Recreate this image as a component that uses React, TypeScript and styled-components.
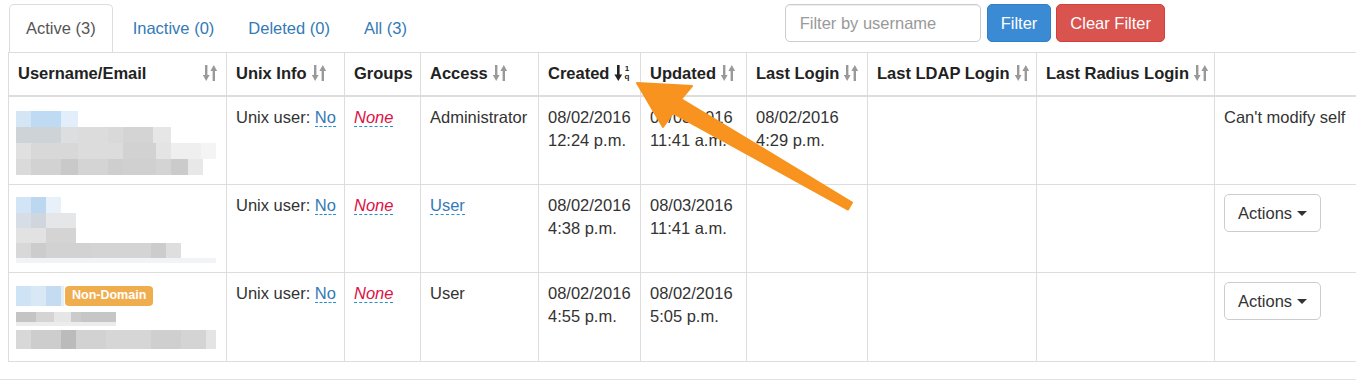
import React from "react";
import styled, { createGlobalStyle } from "styled-components";

const GlobalStyle = createGlobalStyle`
  html, body {
    margin: 0;
    padding: 0;
    overflow: hidden;
    background: #fff;
  }
  body {
    font-family: "Liberation Sans", Arial, Helvetica, sans-serif;
    font-size: 16.5px;
    line-height: 23px;
    color: #333;
  }
`;

const Page = styled.div`
  position: relative;
  width: 1356px;
  height: 380px;
  padding: 4px 0 0 8px;
  box-sizing: border-box;
  overflow: hidden;
`;

const Toolbar = styled.div`
  display: flex;
  align-items: flex-start;
  width: 1157px;
  height: 48px;
`;

const Tabs = styled.ul`
  display: flex;
  list-style: none;
  margin: 0;
  padding: 0 0 0 1px;
`;

const Tab = styled.li<{ $active?: boolean }>`
  padding: 12px 16px 12px;
  height: 48px;
  box-sizing: border-box;
  margin-right: ${(p) => (p.$active ? "3px" : "0")};
  border: 1px solid ${(p) => (p.$active ? "#ddd" : "transparent")};
  border-bottom: none;
  border-radius: 5px 5px 0 0;
  color: ${(p) => (p.$active ? "#555" : "#337ab7")};
  background: #fff;
  white-space: nowrap;
`;

const FilterForm = styled.form`
  display: flex;
  gap: 5px;
  margin: 0 0 0 auto;
`;

const FilterInput = styled.input`
  width: 196px;
  height: 38px;
  box-sizing: border-box;
  padding: 7px 14px;
  border: 1px solid #ccc;
  border-radius: 5px;
  font: inherit;
  color: #555;
  box-shadow: inset 0 1px 1px rgba(0, 0, 0, 0.075);
  margin-right: 1px;
  &::placeholder {
    color: #999;
  }
`;

const Button = styled.button<{ $variant: "primary" | "danger" | "default" }>`
  height: 38px;
  box-sizing: border-box;
  padding: 7px 13px;
  font: inherit;
  line-height: 22px;
  border-radius: 5px;
  border: 1px solid
    ${(p) =>
      p.$variant === "primary"
        ? "#2f7fc9"
        : p.$variant === "danger"
        ? "#d43f3a"
        : "#ccc"};
  background: ${(p) =>
    p.$variant === "primary"
      ? "#3b8bd4"
      : p.$variant === "danger"
      ? "#d9534f"
      : "#fff"};
  color: ${(p) => (p.$variant === "default" ? "#333" : "#fff")};
  display: inline-flex;
  align-items: center;
  white-space: nowrap;
`;

const Caret = styled.span`
  display: inline-block;
  margin-left: 5px;
  width: 0;
  height: 0;
  border-top: 5px solid #333;
  border-left: 5px solid transparent;
  border-right: 5px solid transparent;
`;

const Table = styled.table`
  border-collapse: collapse;
  table-layout: fixed;
  width: 1351px;
  border: 1px solid #ddd;
`;

const Th = styled.th`
  text-align: left;
  vertical-align: bottom;
  font-weight: bold;
  color: #222;
  padding: 9px 9px 10px;
  border: 1px solid #ddd;
  border-bottom: 2px solid #ddd;
  white-space: nowrap;
  line-height: 23px;
`;

const Td = styled.td`
  vertical-align: top;
  padding: 9px;
  border: 1px solid #ddd;
  line-height: 23px;
  white-space: nowrap;
`;

const FloatIcon = styled.span`
  float: right;
  margin-top: 2px;
  height: 18px;
`;

const InlineIcon = styled.span`
  display: inline-block;
  margin: 2px 0 0 5px;
  height: 18px;
  vertical-align: top;
`;

const Editable = styled.span<{ $empty?: boolean }>`
  color: ${(p) => (p.$empty ? "#dd1144" : "#337ab7")};
  font-style: ${(p) => (p.$empty ? "italic" : "normal")};
  border-bottom: 1px dashed #2a8fd1;
`;

const UserBlock = styled.div`
  height: 69px;
  margin-left: -2px;
`;

const BadgeLine = styled.div`
  display: flex;
  align-items: center;
  height: 26px;
  margin-top: 1px;
`;

const Label = styled.span`
  display: inline-block;
  background: #f0ad4e;
  color: #fff;
  font-weight: bold;
  font-size: 12.5px;
  line-height: 1;
  padding: 3px 7px 4px;
  border-radius: 4px;
  margin-left: 1px;
  white-space: nowrap;
`;

const FooterLine = styled.div`
  margin: 17px 0 0 -8px;
  width: 1356px;
  border-top: 1px solid #e2e2e2;
`;

const Overlay = styled.svg`
  position: absolute;
  left: 0;
  top: 0;
  pointer-events: none;
`;

type Block = [number, number, number, number, string];

function Mosaic({ blocks, width, height }: { blocks: Block[]; width: number; height: number }) {
  return (
    <svg width={width} height={height} shapeRendering="crispEdges" style={{ display: "block" }}>
      {blocks.map(([x, y, w, h, c], i) => (
        <rect key={i} x={x} y={y} width={w} height={h} fill={c} />
      ))}
    </svg>
  );
}

function SortIcon() {
  return (
    <svg width="14" height="18" viewBox="0 0 14 18" style={{ display: "block" }}>
      <rect x="2" y="1" width="2.4" height="11" fill="#999" />
      <polygon points="-0.2,11 6.6,11 3.2,17" fill="#999" />
      <rect x="9.6" y="6" width="2.4" height="11" fill="#999" />
      <polygon points="7.4,7 14.2,7 10.8,1" fill="#999" />
    </svg>
  );
}

function SortOrderIcon() {
  return (
    <svg width="18" height="18" viewBox="0 0 18 18" style={{ display: "block" }}>
      <rect x="3" y="1" width="2.6" height="11" fill="#222" />
      <polygon points="0.4,10.5 8.2,10.5 4.3,17" fill="#222" />
      <text x="13" y="7" fontSize="8" fontWeight="bold" fontFamily="Liberation Sans, Arial, sans-serif" fill="#222" textAnchor="middle">1</text>
      <text x="13" y="14.5" fontSize="8" fontWeight="bold" fontFamily="Liberation Sans, Arial, sans-serif" fill="#222" textAnchor="middle">q</text>
    </svg>
  );
}

const mosaic1: Block[] = [
  [0, 5, 15, 16, "#d4e6f6"],
  [15, 5, 30, 16, "#bedbf3"],
  [45, 5, 17, 16, "#e2eefa"],
  [0, 21, 45, 16, "#ced3d7"],
  [45, 21, 17, 16, "#dcdee0"],
  [62, 21, 30, 16, "#dcdcdc"],
  [92, 21, 15, 16, "#d9d9d9"],
  [107, 21, 30, 16, "#d4d4d4"],
  [137, 21, 18, 16, "#e6e6e6"],
  [0, 37, 15, 16, "#e0e0e0"],
  [15, 37, 47, 16, "#d8d8d8"],
  [62, 37, 45, 16, "#dcdcdc"],
  [107, 37, 33, 16, "#d2d2d2"],
  [140, 37, 15, 16, "#e4e4e4"],
  [155, 37, 30, 16, "#efefef"],
  [185, 37, 15, 16, "#f4f4f4"],
  [0, 53, 15, 16, "#dadada"],
  [15, 53, 30, 16, "#d2d2d2"],
  [45, 53, 17, 16, "#c9c9c9"],
  [62, 53, 30, 16, "#d4d4d4"],
  [92, 53, 15, 16, "#cecece"],
  [107, 53, 33, 16, "#d0d0d0"],
  [140, 53, 15, 16, "#d4d4d4"],
  [155, 53, 17, 16, "#cbcbcb"],
  [172, 53, 15, 16, "#e8e8e8"],
];

const mosaic2: Block[] = [
  [0, 3, 15, 16, "#d2e5f6"],
  [15, 3, 15, 16, "#bcd8f1"],
  [30, 3, 15, 16, "#e8f1fa"],
  [0, 19, 15, 15, "#d6dde4"],
  [15, 19, 15, 15, "#cfd6dd"],
  [30, 19, 30, 15, "#e4e6e8"],
  [0, 34, 30, 15, "#e2e2e2"],
  [30, 34, 30, 15, "#d4d4d4"],
  [0, 49, 15, 15, "#d8d8d8"],
  [15, 49, 15, 15, "#cccccc"],
  [30, 49, 45, 15, "#d2d2d2"],
  [75, 49, 60, 15, "#d4d4d4"],
  [135, 49, 15, 15, "#cccccc"],
  [150, 49, 15, 15, "#dedede"],
  [0, 64, 200, 5, "#f1f3f6"],
];

const mosaic3Top: Block[] = [
  [0, 0, 15, 20, "#cfe3f6"],
  [15, 0, 15, 20, "#d9e8f5"],
  [30, 0, 15, 20, "#c4dcf2"],
  [45, 0, 3, 20, "#e6eef6"],
];

const mosaic3Rest: Block[] = [
  [0, 3, 20, 10, "#c4c4c4"],
  [20, 3, 18, 10, "#d4d4d4"],
  [38, 3, 17, 10, "#e6e6e6"],
  [55, 3, 10, 10, "#cbcbcb"],
  [65, 3, 35, 10, "#c6c6c6"],
  [0, 13, 100, 4, "#ececec"],
  [0, 21, 15, 19, "#d8d8d8"],
  [15, 21, 30, 19, "#cdcdcd"],
  [45, 21, 15, 19, "#bbbbbb"],
  [60, 21, 30, 19, "#d2d2d2"],
  [90, 21, 45, 19, "#d6d6d6"],
  [135, 21, 30, 19, "#cfcfcf"],
  [165, 21, 25, 19, "#d4d4d4"],
  [190, 21, 10, 19, "#e4e4e4"],
];

const cols = [218, 118, 76, 118, 102, 106, 121, 169, 178, 145];

const headers: { label: string; icon: "sort" | "order" | "none" }[] = [
  { label: "Unix Info", icon: "sort" },
  { label: "Groups", icon: "none" },
  { label: "Access", icon: "sort" },
  { label: "Created", icon: "order" },
  { label: "Updated", icon: "sort" },
  { label: "Last Login", icon: "sort" },
  { label: "Last LDAP Login", icon: "sort" },
  { label: "Last Radius Login", icon: "sort" },
];

type Row = {
  user: React.ReactNode;
  access: React.ReactNode;
  created: [string, string];
  updated: [string, string];
  lastLogin?: [string, string];
  action: React.ReactNode;
};

const rows: Row[] = [
  {
    user: (
      <UserBlock>
        <Mosaic blocks={mosaic1} width={205} height={69} />
      </UserBlock>
    ),
    access: "Administrator",
    created: ["08/02/2016", "12:24 p.m."],
    updated: ["08/03/2016", "11:41 a.m."],
    lastLogin: ["08/02/2016", "4:29 p.m."],
    action: "Can't modify self",
  },
  {
    user: (
      <UserBlock>
        <Mosaic blocks={mosaic2} width={205} height={69} />
      </UserBlock>
    ),
    access: <Editable>User</Editable>,
    created: ["08/02/2016", "4:38 p.m."],
    updated: ["08/03/2016", "11:41 a.m."],
    action: (
      <Button $variant="default" type="button">
        Actions
        <Caret />
      </Button>
    ),
  },
  {
    user: (
      <UserBlock>
        <BadgeLine>
          <Mosaic blocks={mosaic3Top} width={48} height={20} />
          <Label>Non-Domain</Label>
        </BadgeLine>
        <Mosaic blocks={mosaic3Rest} width={205} height={42} />
      </UserBlock>
    ),
    access: "User",
    created: ["08/02/2016", "4:55 p.m."],
    updated: ["08/02/2016", "5:05 p.m."],
    action: (
      <Button $variant="default" type="button">
        Actions
        <Caret />
      </Button>
    ),
  },
];

function TwoLines({ v }: { v?: [string, string] }) {
  if (!v) return null;
  return (
    <>
      {v[0]}
      <br />
      {v[1]}
    </>
  );
}

export default function App() {
  return (
    <>
      <GlobalStyle />
      <Page>
        <Toolbar>
          <Tabs>
            <Tab $active>Active (3)</Tab>
            <Tab>Inactive (0)</Tab>
            <Tab>Deleted (0)</Tab>
            <Tab>All (3)</Tab>
          </Tabs>
          <FilterForm onSubmit={(e) => e.preventDefault()}>
            <FilterInput placeholder="Filter by username" />
            <Button $variant="primary" type="submit">Filter</Button>
            <Button $variant="danger" type="button">Clear Filter</Button>
          </FilterForm>
        </Toolbar>
        <Table>
          <colgroup>
            {cols.map((w, i) => (
              <col key={i} style={{ width: w }} />
            ))}
          </colgroup>
          <thead>
            <tr>
              <Th>
                Username/Email
                <FloatIcon>
                  <SortIcon />
                </FloatIcon>
              </Th>
              {headers.map((h) => (
                <Th key={h.label}>
                  {h.label}
                  {h.icon !== "none" && (
                    <InlineIcon>{h.icon === "order" ? <SortOrderIcon /> : <SortIcon />}</InlineIcon>
                  )}
                </Th>
              ))}
              <Th />
            </tr>
          </thead>
          <tbody>
            {rows.map((r, i) => (
              <tr key={i}>
                <Td>{r.user}</Td>
                <Td>
                  Unix user: <Editable>No</Editable>
                </Td>
                <Td>
                  <Editable $empty>None</Editable>
                </Td>
                <Td>{r.access}</Td>
                <Td>
                  <TwoLines v={r.created} />
                </Td>
                <Td>
                  <TwoLines v={r.updated} />
                </Td>
                <Td>
                  <TwoLines v={r.lastLogin} />
                </Td>
                <Td />
                <Td />
                <Td>{r.action}</Td>
              </tr>
            ))}
          </tbody>
        </Table>
        <FooterLine />
        <Overlay width="1356" height="380" viewBox="0 0 1356 380">
          <polygon
            points="637,83 692,86 681,99 852,202.5 848,209.5 673,113 663,127"
            fill="#f7931e"
            stroke="#f7931e"
            strokeWidth="2"
            strokeLinejoin="round"
          />
        </Overlay>
      </Page>
    </>
  );
}
